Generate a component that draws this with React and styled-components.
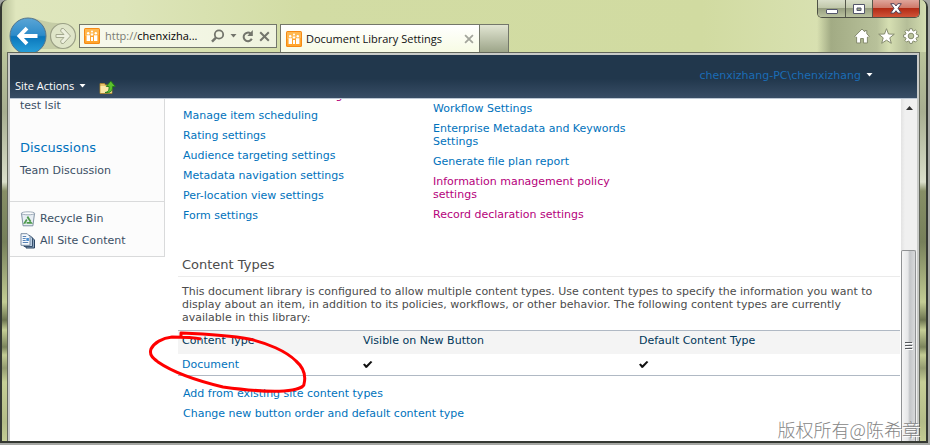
import React from "react";
import styled, { createGlobalStyle } from "styled-components";

const verdana = '"DejaVu Sans", Verdana, sans-serif';
const segoe = '"Open Sans", "Noto Sans", sans-serif';

const GlobalStyle = createGlobalStyle`
  * { box-sizing: border-box; }
  html, body { margin: 0; padding: 0; overflow: hidden; }
  body { font-family: ${verdana}; font-size: 11px; line-height: 13px; color: #4c4c4c; }
  button { font: inherit; color: inherit; background: none; border: 0; padding: 0; cursor: pointer; }
  svg { display: block; flex: none; }
`;

const Desktop = styled.div`
  position: relative;
  display: flex;
  height: 100vh;
  padding: 0 2px 2px 0;
  background: #a5a7a3;
`;

const Window = styled.div`
  flex: 1;
  min-width: 0;
  display: flex;
  flex-direction: column;
  border: solid #343832;
  border-width: 0 2px 2px 2px;
  border-radius: 7px 7px 0 0;
  background: linear-gradient(90deg, #b9c29a 0, #dfe6bd 14px, #dde5ba 120px, #d2dca4 300px, #d1dba1 700px, #dae2b5 850px, #d4ddb0 100%);
  overflow: hidden;
`;

const Chrome = styled.header`
  flex: none;
  display: flex;
  height: 52px;
  padding-left: 7px;
  font: 11px/18px ${segoe};
  color: #111;
`;

const NavButtons = styled.div`
  width: 70px;
  padding-top: 17px;
  overflow: hidden;
`;

const AddressBar = styled.form`
  display: flex;
  align-items: center;
  width: 198px;
  height: 24px;
  margin: 24px 3px 0 0;
  padding: 0 6px 0 4px;
  gap: 5px;
  border: 1px solid #73776a;
  background: linear-gradient(90deg, #f7f9ec, #eff3de);
`;

const Address = styled.div`
  flex: 1;
  min-width: 0;
  display: flex;
  label { color: #7a7c72; }
  input { flex: 1; min-width: 0; border: 0; padding: 0; background: none; font: inherit; color: #000; outline: 0; }
`;

const Tools = styled.div`
  display: flex;
  align-items: center;
  gap: 5px;
`;

const Tab = styled.div`
  display: flex;
  align-items: center;
  gap: 4px;
  width: 200px;
  margin-top: 24px;
  padding: 0 5px;
  border: 1px solid #73776a;
  border-bottom: 0;
  background: linear-gradient(#ffffff, #f7fbe4);
  white-space: nowrap;
  span { flex: 1; }
`;

const NewTab = styled.button`
  width: 29px;
  margin-top: 24px;
  border: 1px solid #73776a !important;
  border-left: 0 !important;
  border-bottom: 0 !important;
  background: linear-gradient(#e1e5d2, #9da589) !important;
`;

const ChromeRight = styled.div`
  margin-left: auto;
  width: 109px;
  display: flex;
  flex-direction: column;
  align-items: flex-end;
  padding-right: 6px;
  background: linear-gradient(90deg, #a2ab8400 0, #a2ab84 14px, #b8c19a 60px, #d6dfb2 72px, #b5be98 90px, #d4ddb0 100%);
`;

const Caption = styled.div`
  display: flex;
  height: 18px;
  border: 1px solid #4e5145;
  border-top: 0;
  border-radius: 0 0 5px 5px;
  overflow: hidden;
`;

const CaptionButton = styled.button`
  display: flex;
  align-items: center;
  justify-content: center;
  width: ${(p) => (p.$close ? 47 : 27)}px;
  border-left: ${(p) => (p.$first ? "0" : "1px solid #55584b")} !important;
  background: ${(p) =>
    p.$close
      ? "linear-gradient(#dfa59b 0, #cf7a6a 45%, #b32b15 50%, #d05338 100%)"
      : "linear-gradient(#d9dec9 0, #c1c8ab 45%, #979f80 50%, #b9c19f 100%)"} !important;
`;

const Commands = styled.div`
  display: flex;
  gap: 8px;
  margin: 10px 1px 0 0;
`;

const Client = styled.div`
  flex: 1;
  min-height: 0;
  display: flex;
  background: linear-gradient(#bac49a 0, #a7ae90 60px, #dadfca 130px, #878f66 139px, #76805a 190px, #c3cc94 250px, #6c744f 268px, #c6cf96 278px, #7b845c 295px, #c3cc94 303px, #939b70 316px, #c6cf96 330px, #b4bd88 370px, #c3cc94 100%);
`;

const Page = styled.div`
  flex: 1;
  min-width: 0;
  display: flex;
  flex-direction: column;
  margin: 0 6px 0 5px;
  border: solid #62665a;
  border-width: 1px 1px 0 1px;
  padding: 2px 2px 0;
  background: #c9cbc8;
`;

const Ribbon = styled.div`
  flex: none;
  display: flex;
  justify-content: space-between;
  height: 44px;
  padding: 0 44px 3px 5px;
  border-bottom: 1px solid #bcc7d4;
  background: linear-gradient(#21374c 0, #21374c 55%, #384d65 100%);
`;

const RibbonLeft = styled.div`
  display: flex;
  align-items: flex-end;
  gap: 13px;
  font: 11px/18px ${segoe};
  color: #fff;
`;

const MenuButton = styled.button`
  display: flex;
  align-items: center;
  gap: 5px;
  color: ${(p) => (p.$link ? "#1b6cb5" : "#fff")};
`;

const Body = styled.div`
  flex: 1;
  min-height: 0;
  display: flex;
  align-items: stretch;
  background: #fff;
  overflow: hidden;
`;

const Sidebar = styled.nav`
  flex: none;
  align-self: flex-start;
  width: 155px;
  background: #fcfcfc;
  border: solid #d9dadb;
  border-width: 0 1px 1px 0;
`;

const SideGroup = styled.div`
  display: flex;
  flex-direction: column;
  align-items: flex-start;
  gap: ${(p) => (p.$tools ? 6 : 8)}px;
  padding: ${(p) => (p.$tools ? "9px 10px 7px" : "0 10px 24px")};
  border-top: ${(p) => (p.$tools ? "1px solid #d9dadb" : "0")};
`;

const SideLink = styled.a`
  display: flex;
  align-items: center;
  gap: 4px;
  line-height: ${(p) => (p.$heading ? 17 : p.$icon ? 16 : 13)}px;
  font-size: ${(p) => (p.$heading ? 13 : 11)}px;
  color: ${(p) => (p.$heading ? "#0072bc" : "#3b4f65")};
  text-decoration: none;
  margin-top: ${(p) => (p.$heading ? 19 : 0)}px;
`;

const Main = styled.main`
  position: relative;
  flex: 1;
  min-width: 0;
  padding: 0 1px 0 13px;
`;

const LinkColumns = styled.div`
  display: grid;
  grid-template-columns: 250px 220px;
  align-items: start;
  padding-left: 5px;
`;

const LinkList = styled.div`
  display: flex;
  flex-direction: column;
  align-items: flex-start;
  gap: 7px;
  margin-top: ${(p) => p.$top || 0}px;
  padding-left: ${(p) => (p.$indent ? 5 : 0)}px;
`;

const Link = styled.a`
  color: ${(p) => (p.$visited ? "#b5007b" : "#0072bc")};
  text-decoration: none;
`;

const Heading = styled.h2`
  margin: 35px 0 8px;
  padding: 0 4px 3px;
  border-bottom: 1px solid #ebebeb;
  font-size: 13px;
  line-height: 16px;
  font-weight: 400;
`;

const Intro = styled.p`
  margin: 0 0 6px;
  padding: 0 16px 0 4px;
`;

const Table = styled.table`
  width: 100%;
  table-layout: fixed;
  border-collapse: collapse;
  border: solid #b0b9c4;
  border-width: 1px 0;
  margin-bottom: 11px;
  th, td { text-align: left; font-weight: 400; padding: 0 4px; vertical-align: top; }
  th { height: 23px; padding-top: 3px; background: #f4f4f4; color: #003759; }
  td { height: 22px; padding-top: 4px; }
  th:nth-child(1) { width: 181px; }
  th:nth-child(2) { width: 276px; }
`;

const Marker = styled.svg`
  position: absolute;
  left: -17px;
  top: 230px;
`;

const Scrollbar = styled.div`
  flex: none;
  display: flex;
  flex-direction: column;
  width: 16px;
  background: linear-gradient(90deg, #e3e3e3, #f0f0f0 4px);
`;

const ScrollButton = styled.button`
  display: flex;
  justify-content: center;
  align-items: center;
  height: 18px;
`;

const Thumb = styled.div`
  flex: 1;
  margin-top: 133px;
  width: 15px;
  display: flex;
  justify-content: center;
  align-items: center;
  border: 1px solid #8f9193;
  border-bottom: 0;
  border-radius: 2px 2px 0 0;
  background: linear-gradient(90deg, #f5f5f5, #e6e7e8 45%, #c3c5c8 60%, #d8d9db);
`;

const Watermark = styled.div`
  position: absolute;
  right: 10px;
  bottom: 4px;
  font: 300 18px/24px "Noto Sans CJK SC", sans-serif;
  color: #868686;
  text-shadow: 1px 1px 0 #fff;
`;

const SiteIcon = () => (
  <svg width="16" height="16" viewBox="0 0 16 16">
    <rect width="16" height="16" rx="1.5" fill="#f58a14" />
    <rect x="1" y="1" width="14" height="14" rx="1" fill="#ffa52e" />
    <path d="M1 1h14v6C10 5 5 9 1 8z" fill="#ffc467" opacity=".6" />
    <g fill="#fff">
      <circle cx="4.2" cy="5.2" r="1.2" /><circle cx="8" cy="3.4" r="1" /><circle cx="11.8" cy="5.2" r="1.2" />
      <path d="M2.600 7.200h3.400V13H2.600zM10 7.200h3.400V13H10zM6.800 5.600h2.400v1.800H6.800zM7 9h2v4H7z" />
    </g>
  </svg>
);

const Caret = ({ color = "#fff" }) => (
  <svg width="7" height="4" viewBox="0 0 7 4"><path d="M.5 0h6L3.5 3.5z" fill={color} /></svg>
);

const Cross = ({ color, size = 11 }) => (
  <svg width={size} height={size} viewBox="0 0 11 11"><path d="M1.2 1.2l8.6 8.6M9.8 1.2L1.2 9.8" stroke={color} strokeWidth="2" /></svg>
);

const Check = () => (
  <svg width="10" height="13" viewBox="0 0 10 13"><path d="M0 6.600L1.700 5.500 3.400 7.300 7.700 3 9.400 4 4 9.800 2.800 9.900z" fill="#111" /></svg>
);

const BackForward = () => (
  <svg width="70" height="38" viewBox="0 0 70 38">
    <defs>
      <linearGradient id="back" x1="0" y1="0" x2="0" y2="1">
        <stop offset="0" stopColor="#5aa5d6" /><stop offset=".48" stopColor="#2d8bc9" /><stop offset=".52" stopColor="#0a76bb" /><stop offset="1" stopColor="#2aa3dc" />
      </linearGradient>
    </defs>
    <path d="M24 1C36 4 42 7 56 6L54 32H28z" fill="#b1b893" opacity=".55" />
    <circle cx="19" cy="19" r="18" fill="url(#back)" stroke="#56758a" strokeWidth="1" />
    <path d="M28.500 19H11M18 11.200L10.400 19l7.600 7.800" fill="none" stroke="#fff" strokeWidth="3.8" />
    <circle cx="54" cy="19" r="12.500" fill="#dfe5c8" stroke="#9a9f85" strokeWidth="1.200" />
    <path d="M47 17.500h8l-3.500-3.500 1-2.500h2l7 7.500-7 7.500h-2l-1-2.500 3.500-3.500h-8z" fill="#edf0de" stroke="#a4a98f" strokeWidth="1" />
  </svg>
);

const Magnifier = () => (
  <svg width="14" height="14" viewBox="0 0 14 14"><circle cx="8" cy="5.500" r="4.200" fill="none" stroke="#73756c" strokeWidth="1.800" /><path d="M5 8.700L1 12.700" stroke="#73756c" strokeWidth="2.400" /></svg>
);

const Reload = () => (
  <svg width="12" height="13" viewBox="0 0 12 13"><path d="M9.800 8.800A4.300 4.300 0 1 1 8.600 3.500" fill="none" stroke="#73756c" strokeWidth="2" /><path d="M10.800 0v6H5.300z" fill="#73756c" /></svg>
);

const commandStroke = { fill: "#fff", stroke: "#858b6e", strokeWidth: 1, strokeLinejoin: "round" };

const Home = () => (
  <svg width="16" height="16" viewBox="0 0 16 16"><path d="M8 1L.8 8.300l1.200 1.200.6-.4V15h4v-4.500h2.800V15h4V9.100l.6.4 1.200-1.200L12.800 5.800V2.500h-2v1.400z" {...commandStroke} /></svg>
);

const Star = () => (
  <svg width="17" height="16" viewBox="0 0 17 16"><path d="M8.500.7l2 5.300 5.800.2-4.500 3.600 1.500 5.500-4.800-3.100-4.800 3.100 1.500-5.500L.7 6.200 6.500 6z" {...commandStroke} /></svg>
);

const Gear = () => (
  <svg width="16" height="16" viewBox="0 0 16 16">
    <path fillRule="evenodd" d="M6.800.7h2.400l.4 1.900 1.200.5 1.600-1.100 1.700 1.700L13 5.200l.5 1.200 1.900.4v2.400l-1.900.4-.5 1.200 1.100 1.600-1.700 1.700-1.600-1.100-1.200.5-.4 1.900H6.800l-.4-1.900-1.200-.5-1.600 1.100-1.700-1.700L3 10.800l-.5-1.200-1.900-.4V6.800l1.900-.4L3 5.200 1.900 3.600l1.700-1.700 1.600 1.200 1.200-.5zM8 5.200a2.800 2.800 0 1 0 0 5.600 2.800 2.800 0 0 0 0-5.600z" {...commandStroke} />
  </svg>
);

const FolderUp = () => (
  <svg width="17" height="16" viewBox="0 0 17 16">
    <path d="M1 4.500h4.500l1 1.500H13v8.500H1z" fill="#e8c36a" stroke="#a9842f" strokeWidth=".8" />
    <path d="M1.500 7h11v7h-11z" fill="#fae7a8" />
    <path d="M6 13.500c3.500-.5 4.200-2.500 4-6H7.300L11.800 2l4.500 5.500H13.600c.2 4-2 7-7.600 6z" fill="#5cc12d" stroke="#23791a" strokeWidth=".9" />
  </svg>
);

const RecycleBin = () => (
  <svg width="16" height="16" viewBox="0 0 16 16">
    <path d="M1.500 2.500h13l-1.600 12.300H3.100z" fill="#e8eef4" stroke="#73869a" strokeWidth=".9" />
    <ellipse cx="8" cy="2.300" rx="6.700" ry="1.500" fill="#fbfcfd" stroke="#8b9bab" strokeWidth=".8" />
    <path d="M8 6.500l3.300 5.400H4.700z" fill="none" stroke="#4f9a4d" strokeWidth="1.800" strokeDasharray="5 1" />
  </svg>
);

const Pages = () => (
  <svg width="16" height="16" viewBox="0 0 16 16">
    <path d="M6 4.500h6l2.500 2.500v8H6z" fill="#8ba4be" stroke="#29425f" strokeWidth="1" />
    <path d="M4 2.500h6l2.500 2.500v8.500H4z" fill="#bcd0e3" stroke="#38516e" strokeWidth="1" />
    <path d="M1 .7h6.200L10 3.500v8.800H1z" fill="#f7fafd" stroke="#6c8099" strokeWidth=".9" />
    <path d="M2.700 3.500h3.500M2.700 5.500h3M2.700 7.500h3M2.700 9.500h5.500" stroke="#5a82b4" strokeWidth="1" />
    <rect x="6.300" y="5" width="2.600" height="3" fill="#4b90d4" />
  </svg>
);

const leftLinks = ["Manage item scheduling", "Rating settings", "Audience targeting settings", "Metadata navigation settings", "Per-location view settings", "Form settings"];
const rightLinks = [
  ["Workflow Settings"],
  ["Enterprise Metadata and Keywords Settings"],
  ["Generate file plan report"],
  ["Information management policy settings", true],
  ["Record declaration settings", true],
];

function BrowserChrome() {
  return (
    <Chrome>
      <NavButtons><BackForward /></NavButtons>
      <AddressBar>
        <SiteIcon />
        <Address>
          <label htmlFor="address">http://</label>
          <input id="address" defaultValue="chenxizha..." />
        </Address>
        <Tools>
          <button type="button" aria-label="Search"><Magnifier /></button>
          <button type="button" aria-label="Search options"><Caret color="#73756c" /></button>
          <button type="button" aria-label="Refresh"><Reload /></button>
          <button type="button" aria-label="Stop"><Cross color="#73756c" /></button>
        </Tools>
      </AddressBar>
      <Tab>
        <SiteIcon />
        <span>Document Library Settings</span>
        <button aria-label="Close tab"><Cross color="#a3a59c" size={10} /></button>
      </Tab>
      <NewTab aria-label="New tab" />
      <ChromeRight>
        <Caption>
          <CaptionButton $first aria-label="Minimize">
            <svg width="12" height="14" viewBox="0 0 12 14"><rect x=".5" y="7.500" width="11" height="4" rx=".5" fill="#fff" stroke="#53566b" /></svg>
          </CaptionButton>
          <CaptionButton aria-label="Maximize">
            <svg width="12" height="12" viewBox="0 0 12 12"><path fillRule="evenodd" d="M.5 1.500h11v9H.5zM4 5v2.500h4V5z" fill="#fff" stroke="#53566b" /></svg>
          </CaptionButton>
          <CaptionButton $close aria-label="Close">
            <svg width="12" height="11" viewBox="0 0 12 11"><path d="M.7.7h3.500L6 3 7.800.7h3.500L8 5.300l3.300 4.800H7.800L6 7.700l-1.800 2.400H.7L4 5.300z" fill="#fff" stroke="#53465b" /></svg>
          </CaptionButton>
        </Caption>
        <Commands>
          <button aria-label="Home"><Home /></button>
          <button aria-label="Favorites"><Star /></button>
          <button aria-label="Tools"><Gear /></button>
        </Commands>
      </ChromeRight>
    </Chrome>
  );
}

export default function App() {
  return (
    <Desktop>
      <GlobalStyle />
      <Window>
        <BrowserChrome />
        <Client>
          <Page>
            <Ribbon>
              <RibbonLeft>
                <MenuButton>Site Actions <Caret /></MenuButton>
                <button aria-label="Navigate up"><FolderUp /></button>
              </RibbonLeft>
              <MenuButton $link>chenxizhang-PC\chenxizhang <Caret /></MenuButton>
            </Ribbon>
            <Body>
              <Sidebar>
                <SideGroup>
                  <SideLink href="#list">test lsit</SideLink>
                  <SideLink href="#discussions" $heading>Discussions</SideLink>
                  <SideLink href="#team">Team Discussion</SideLink>
                </SideGroup>
                <SideGroup $tools>
                  <SideLink href="#bin" $icon><RecycleBin />Recycle Bin</SideLink>
                  <SideLink href="#all" $icon><Pages />All Site Content</SideLink>
                </SideGroup>
              </Sidebar>
              <Main>
                <LinkColumns>
                  <LinkList $top={-10}>
                    <Link href="#column" $visited>Column default value settings</Link>
                    {leftLinks.map((t) => <Link href="#setting" key={t}>{t}</Link>)}
                  </LinkList>
                  <LinkList $top={3}>
                    {rightLinks.map(([t, v]) => <Link href="#setting" key={t} $visited={v}>{t}</Link>)}
                  </LinkList>
                </LinkColumns>
                <Heading>Content Types</Heading>
                <Intro>
                  This document library is configured to allow multiple content types. Use content types to specify the information you want to display about an item, in addition to its policies, workflows, or other behavior. The following content types are currently available in this library:
                </Intro>
                <Table>
                  <thead>
                    <tr><th>Content Type</th><th>Visible on New Button</th><th>Default Content Type</th></tr>
                  </thead>
                  <tbody>
                    <tr>
                      <td><Link href="#document">Document</Link></td>
                      <td aria-label="Yes"><Check /></td>
                      <td aria-label="Yes"><Check /></td>
                    </tr>
                  </tbody>
                </Table>
                <LinkList $indent>
                  <Link href="#add">Add from existing site content types</Link>
                  <Link href="#order">Change new button order and default content type</Link>
                </LinkList>
                <Marker width="162" height="66" viewBox="0 0 162 66" aria-hidden="true">
                  <path d="M53 10C44 8 34 8 24 8C14 9 6 14 3 20C1 26 5 29 10 33C26 44 46 51 75 58C97 61 118 63 136 62C149 61 156 58 156 55C158 47 156 39 148 32C138 22 119 14 101 10C80 6 58 5 33 4V8" fill="none" stroke="#f00" strokeWidth="3" strokeLinejoin="round" />
                </Marker>
              </Main>
              <Scrollbar>
                <ScrollButton aria-label="Scroll up">
                  <svg width="7" height="4" viewBox="0 0 7 4"><path d="M0 4h7L3.500 0z" fill="#333" /></svg>
                </ScrollButton>
                <Thumb>
                  <svg width="8" height="9" viewBox="0 0 8 9"><path d="M0 .5h7M0 3.500h7M0 6.500h7" stroke="#55585c" /><path d="M1 1.500h7M1 4.500h7M1 7.500h7" stroke="#fff" /></svg>
                </Thumb>
              </Scrollbar>
            </Body>
          </Page>
        </Client>
      </Window>
      <Watermark>版权所有@陈希章</Watermark>
    </Desktop>
  );
}
